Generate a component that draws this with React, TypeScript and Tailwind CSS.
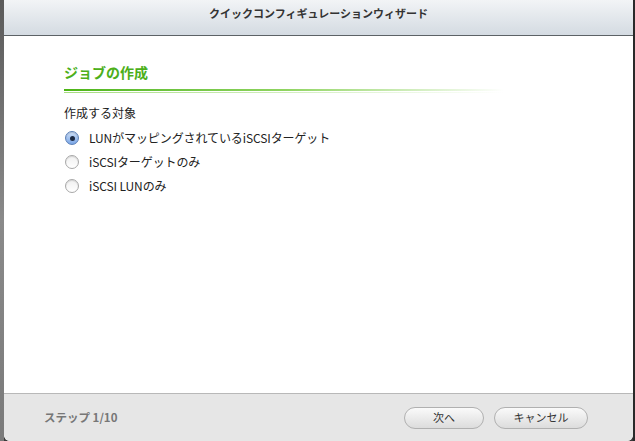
import React from "react";

const font = { fontFamily: '"Noto Sans CJK JP", "Noto Sans", sans-serif' };

function Radio({ checked }: { checked?: boolean }) {
  return checked ? (
    <span className="flex h-[14px] w-[14px] items-center justify-center rounded-full border border-[#5a7fb8] bg-gradient-to-b from-[#cfe0f7] to-[#7aa6e6] shadow-[inset_0_1px_1px_rgba(0,0,0,0.15)]">
      <span className="h-[5px] w-[5px] rounded-full bg-[#1c2a44]" />
    </span>
  ) : (
    <span className="h-[14px] w-[14px] rounded-full border border-[#a8a8a8] bg-gradient-to-b from-[#f0f0f0] to-[#ffffff] shadow-[inset_0_1px_1px_rgba(0,0,0,0.12)]" />
  );
}

export default function App() {
  const options = [
    { label: "LUNがマッピングされているiSCSIターゲット", checked: true },
    { label: "iSCSIターゲットのみ" },
    { label: "iSCSI LUNのみ" },
  ];
  return (
    <div className="flex h-[441px] w-[635px] bg-[#3a3a3a]" style={font}>
      <div className="w-[4px] bg-gradient-to-b from-[#5a5a5a] via-[#8a8a8a] to-[#7a7a7a]" />
      <div className="flex w-[629px] flex-col overflow-hidden rounded-b-[6px] bg-white">
        <div className="flex h-[36px] items-start justify-center border-b border-[#5c6266] bg-gradient-to-b from-[#f2f4f6] to-[#d4dbe2] pt-[5px]">
          <span className="text-[11px] font-bold text-[#333]">クイックコンフィギュレーションウィザード</span>
        </div>
        <div className="flex flex-1 flex-col bg-white pl-[60px] pt-[26px]">
          <div className="text-[14px] font-bold leading-[20px] text-[#4caf1a]">ジョブの作成</div>
          <div className="mt-[7px] h-[2px] w-[440px] bg-gradient-to-r from-[#4cb513] via-[#8fd460] to-transparent" />
          <div className="mt-[1px] h-[1px] w-[440px] bg-gradient-to-r from-[#a6dc80] to-transparent" />
          <div className="mt-[12px] text-[12px] leading-[16px] text-[#222]">作成する対象</div>
          <div className="mt-[8px] flex flex-col gap-[6px]">
            {options.map((o) => (
              <div key={o.label} className="flex h-[18px] items-center gap-[10px] pl-[1px]">
                <Radio checked={o.checked} />
                <span className="text-[12px] tracking-[-0.1px] text-[#222]">{o.label}</span>
              </div>
            ))}
          </div>
        </div>
        <div className="flex h-[48px] items-center border-t border-[#b8b8b8] bg-[#e6e6e6] pl-[40px] pr-[45px]">
          <span className="text-[11.5px] font-bold text-[#777]">ステップ 1/10</span>
          <div className="ml-auto flex gap-[10px]">
            <button className="h-[22px] w-[80px] rounded-full border border-[#b0b0b0] bg-gradient-to-b from-[#fafafa] to-[#dcdcdc] text-[11px] text-[#333]">次へ</button>
            <button className="h-[22px] w-[94px] rounded-full border border-[#b0b0b0] bg-gradient-to-b from-[#fafafa] to-[#dcdcdc] text-[11px] text-[#333]">キャンセル</button>
          </div>
        </div>
      </div>
      <div className="w-[2px] bg-[#2a2a2a]" />
    </div>
  );
}
